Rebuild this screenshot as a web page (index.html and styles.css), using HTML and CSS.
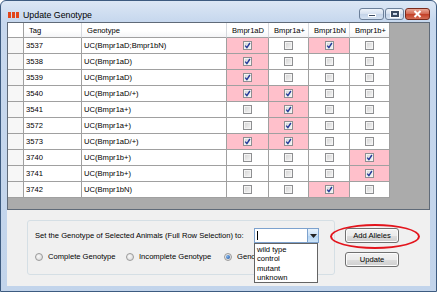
FILE: index.html
```html
<!DOCTYPE html>
<html>
<head>
<meta charset="utf-8">
<link rel="stylesheet" href="styles.css">
</head>
<body>
<div class="window">
  <div class="titlebar">
    <svg class="appicon" width="11" height="6" viewBox="0 0 11 6">
      <rect x="0" y="0" width="3" height="6" fill="#e2461c"/>
      <rect x="4" y="0" width="3" height="6" fill="#e2461c"/>
      <rect x="8" y="0" width="3" height="6" fill="#e2461c"/>
    </svg>
    <span class="title">Update Genotype</span>
    <div class="caption">
      <div class="cbtn min"><span class="minglyph"></span></div>
      <div class="cbtn max"><span class="maxglyph"></span></div>
      <div class="cbtn close">
        <svg width="11" height="8" viewBox="0 0 11 8"><path d="M2.5 1 L8.5 7 M8.5 1 L2.5 7" stroke="#fff" stroke-width="2" fill="none"/></svg>
      </div>
    </div>
  </div>
  <div class="client">
    <div class="grid">
      <div class="hd rh"></div><div class="hd">Tag</div><div class="hd">Genotype</div><div class="hd">Bmpr1aD</div><div class="hd">Bmpr1a+</div><div class="hd">Bmpr1bN</div><div class="hd">Bmpr1b+</div>

      <div class="c rh"></div><div class="c">3537</div><div class="c">UC(Bmpr1aD;Bmpr1bN)</div>
      <div class="c cb pink"><span class="box"><svg viewBox="0 0 9 9"><path d="M2.2 4.6 L3.9 6.6 L6.9 2" class="ck"/></svg></span></div>
      <div class="c cb"><span class="box"></span></div>
      <div class="c cb pink"><span class="box"><svg viewBox="0 0 9 9"><path d="M2.2 4.6 L3.9 6.6 L6.9 2" class="ck"/></svg></span></div>
      <div class="c cb"><span class="box"></span></div>

      <div class="c rh"></div><div class="c">3538</div><div class="c">UC(Bmpr1aD)</div>
      <div class="c cb pink"><span class="box"><svg viewBox="0 0 9 9"><path d="M2.2 4.6 L3.9 6.6 L6.9 2" class="ck"/></svg></span></div>
      <div class="c cb"><span class="box"></span></div>
      <div class="c cb"><span class="box"></span></div>
      <div class="c cb"><span class="box"></span></div>

      <div class="c rh"></div><div class="c">3539</div><div class="c">UC(Bmpr1aD)</div>
      <div class="c cb pink"><span class="box"><svg viewBox="0 0 9 9"><path d="M2.2 4.6 L3.9 6.6 L6.9 2" class="ck"/></svg></span></div>
      <div class="c cb"><span class="box"></span></div>
      <div class="c cb"><span class="box"></span></div>
      <div class="c cb"><span class="box"></span></div>

      <div class="c rh"></div><div class="c">3540</div><div class="c">UC(Bmpr1aD/+)</div>
      <div class="c cb pink"><span class="box"><svg viewBox="0 0 9 9"><path d="M2.2 4.6 L3.9 6.6 L6.9 2" class="ck"/></svg></span></div>
      <div class="c cb pink"><span class="box"><svg viewBox="0 0 9 9"><path d="M2.2 4.6 L3.9 6.6 L6.9 2" class="ck"/></svg></span></div>
      <div class="c cb"><span class="box"></span></div>
      <div class="c cb"><span class="box"></span></div>

      <div class="c rh"></div><div class="c">3541</div><div class="c">UC(Bmpr1a+)</div>
      <div class="c cb"><span class="box"></span></div>
      <div class="c cb pink"><span class="box"><svg viewBox="0 0 9 9"><path d="M2.2 4.6 L3.9 6.6 L6.9 2" class="ck"/></svg></span></div>
      <div class="c cb"><span class="box"></span></div>
      <div class="c cb"><span class="box"></span></div>

      <div class="c rh"></div><div class="c">3572</div><div class="c">UC(Bmpr1a+)</div>
      <div class="c cb"><span class="box"></span></div>
      <div class="c cb pink"><span class="box"><svg viewBox="0 0 9 9"><path d="M2.2 4.6 L3.9 6.6 L6.9 2" class="ck"/></svg></span></div>
      <div class="c cb"><span class="box"></span></div>
      <div class="c cb"><span class="box"></span></div>

      <div class="c rh"></div><div class="c">3573</div><div class="c">UC(Bmpr1aD/+)</div>
      <div class="c cb pink"><span class="box"><svg viewBox="0 0 9 9"><path d="M2.2 4.6 L3.9 6.6 L6.9 2" class="ck"/></svg></span></div>
      <div class="c cb pink"><span class="box"><svg viewBox="0 0 9 9"><path d="M2.2 4.6 L3.9 6.6 L6.9 2" class="ck"/></svg></span></div>
      <div class="c cb"><span class="box"></span></div>
      <div class="c cb"><span class="box"></span></div>

      <div class="c rh"></div><div class="c">3740</div><div class="c">UC(Bmpr1b+)</div>
      <div class="c cb"><span class="box"></span></div>
      <div class="c cb"><span class="box"></span></div>
      <div class="c cb"><span class="box"></span></div>
      <div class="c cb pink"><span class="box"><svg viewBox="0 0 9 9"><path d="M2.2 4.6 L3.9 6.6 L6.9 2" class="ck"/></svg></span></div>

      <div class="c rh"></div><div class="c">3741</div><div class="c">UC(Bmpr1b+)</div>
      <div class="c cb"><span class="box"></span></div>
      <div class="c cb"><span class="box"></span></div>
      <div class="c cb"><span class="box"></span></div>
      <div class="c cb pink"><span class="box"><svg viewBox="0 0 9 9"><path d="M2.2 4.6 L3.9 6.6 L6.9 2" class="ck"/></svg></span></div>

      <div class="c rh"></div><div class="c">3742</div><div class="c">UC(Bmpr1bN)</div>
      <div class="c cb"><span class="box"></span></div>
      <div class="c cb"><span class="box"></span></div>
      <div class="c cb pink"><span class="box"><svg viewBox="0 0 9 9"><path d="M2.2 4.6 L3.9 6.6 L6.9 2" class="ck"/></svg></span></div>
      <div class="c cb"><span class="box"></span></div>
    </div>

    <div class="panel">
      <div class="group">
        <div class="row1">
          <span class="label">Set the Genotype of Selected Animals (Full Row Selection) to:</span>
          <div class="combo"><span class="caret"></span><span class="drop"><svg width="7" height="4" viewBox="0 0 7 4"><path d="M0 0 H7 L3.5 4 Z" fill="#222"/></svg></span></div>
        </div>
        <div class="row2">
          <div class="ritem w1"><span class="radio"></span>Complete Genotype</div>
          <div class="ritem w2"><span class="radio"></span>Incomplete Genotype</div>
          <div class="ritem"><span class="radio on"></span>Genotype Alleles Based</div>
        </div>
      </div>
      <div class="buttons">
        <div class="btn">Add Alleles</div>
        <div class="btn">Update</div>
      </div>
      <div class="list">
        <div class="li">wild type</div>
        <div class="li">control</div>
        <div class="li">mutant</div>
        <div class="li">unknown</div>
      </div>
      <div class="ellipse"></div>
    </div>
  </div>
</div>
</body>
</html>
```

FILE: styles.css
```css
* { box-sizing: border-box; }
html, body { margin: 0; padding: 0; background: #ffffff; }
body {
  font-family: "Liberation Sans", Arial, sans-serif;
  font-size: 7.6px;
  color: #000;
}
.window {
  width: 437px;
  height: 292px;
  border: 1px solid #3d5b80;
  border-radius: 6px 6px 0 0;
  background: linear-gradient(#dce7f5, #c7d8ee 20px, #c2d4eb);
  padding: 0 6px 5px 6px;
  display: flex;
  flex-direction: column;
}
.titlebar {
  height: 21px;
  padding-top: 6px;
  display: flex;
  align-items: center;
  flex: none;
}
.appicon { margin-left: 1px; margin-right: 4px; flex: none; }
.title { font-size: 8.8px; color: #000; }
.caption {
  margin-left: auto;
  display: flex;
  gap: 1px;
  align-self: flex-start;
  margin-top: 1px;
}
.cbtn {
  height: 12px;
  border: 1px solid #6b7f99;
  border-radius: 3px;
  display: flex;
  align-items: center;
  justify-content: center;
  background: linear-gradient(#eef3fa, #d5e0ef 50%, #c4d3e8 51%, #d4e1f1);
}
.min { width: 25px; }
.max { width: 19px; }
.close {
  width: 25px;
  border-color: #7a2a1c;
  background: linear-gradient(#eaa897, #d2654f 50%, #c23d25 51%, #d46d55);
}
.minglyph {
  width: 8px; height: 3px;
  background: #3a4a60;
  border: 1px solid #fff;
  margin-top: 3px;
}
.maxglyph {
  width: 8px; height: 6px;
  border: 2px solid #3a4a60;
  border-top-width: 2px;
  outline: 1px solid #fff;
}
.client {
  flex: 1;
  background: #f0f0f0;
  display: flex;
  flex-direction: column;
}
.grid {
  height: 188px;
  flex: none;
  border: 1px solid #5f6a78;
  background: #ababab;
  display: grid;
  grid-template-columns: 16px 58px 145px 42px 40px 41px 40px;
  grid-template-rows: 15px repeat(10, 16px);
  align-content: start;
  justify-content: start;
}
.hd {
  background: linear-gradient(#ffffff, #ffffff 55%, #f4f5f7);
  border-right: 1px solid #d6d9de;
  border-bottom: 1px solid #a0a0a0;
  padding-left: 5px;
  display: flex;
  align-items: center;
  white-space: nowrap;
}
.hd:nth-child(7) { border-right-color: #a0a0a0; }
.c {
  background: #ffffff;
  border-right: 1px solid #a0a0a0;
  border-bottom: 1px solid #a0a0a0;
  padding-left: 2px;
  display: flex;
  align-items: center;
  white-space: nowrap;
}
.rh { background: #f7f7f7; padding: 0; }
.hd.rh { background: #ffffff; border-right-color: #a0a0a0; }
.cb { justify-content: center; padding: 0; }
.pink { background: #ffc0cb; }
.box {
  width: 9px; height: 9px;
  border: 1px solid #8e8f91;
  background: linear-gradient(135deg, #d2d2d2, #f6f6f6);
  box-shadow: inset 0 0 0 1px #f4f4f4;
  display: block;
  position: relative;
}
.box svg { position: absolute; left: -1px; top: -1px; width: 9px; height: 9px; }
.ck { stroke: #25399a; stroke-width: 1.4; fill: none; }

.panel {
  flex: 1;
  position: relative;
  display: flex;
  align-items: flex-start;
  padding: 10px 0 0 20px;
}
.group {
  width: 308px;
  height: 55px;
  border: 1px solid #d5dfe5;
  border-radius: 3px;
  padding: 7px 0 0 7px;
}
.row1 { display: flex; align-items: center; height: 15px; }
.label { width: 219px; flex: none; white-space: nowrap; }
.combo {
  width: 65px;
  height: 15px;
  border: 1px solid #7da2ce;
  background: #fff;
  display: flex;
  align-items: center;
  justify-content: space-between;
}
.caret { width: 1px; height: 9px; background: #000; margin-left: 2px; }
.drop {
  width: 11px;
  height: 13px;
  border-left: 1px solid #7da2ce;
  background: linear-gradient(#e9f3fc, #c9e0f7 50%, #b2d3f3 51%, #cde4f8);
  display: flex;
  align-items: center;
  justify-content: center;
}
.row2 { display: flex; align-items: center; height: 11px; margin-top: 8px; }
.ritem { display: flex; align-items: center; white-space: nowrap; flex: none; }
.w1 { width: 91px; }
.w2 { width: 98px; }
.radio {
  width: 8px; height: 8px;
  border-radius: 50%;
  border: 1px solid #9a9a9a;
  background: radial-gradient(circle at 40% 40%, #f8f8f8, #d4d4d4);
  margin-right: 5px;
  flex: none;
  position: relative;
}
.radio.on::after {
  content: "";
  position: absolute;
  left: 1px; top: 1px;
  width: 4px; height: 4px;
  border-radius: 50%;
  background: radial-gradient(circle at 35% 35%, #7fb4ec, #1b4f9c);
}
.buttons {
  display: flex;
  flex-direction: column;
  gap: 9px;
  margin-left: 10px;
  margin-top: 8px;
}
.btn {
  width: 54px;
  height: 15px;
  border: 1px solid #707070;
  border-radius: 3px;
  background: linear-gradient(#f2f2f2, #ebebeb 50%, #dddddd 51%, #cfcfcf);
  box-shadow: inset 0 0 0 1px #fcfcfc;
  display: flex;
  align-items: center;
  justify-content: center;
}
.list {
  position: absolute;
  left: 247px;
  top: 33px;
  width: 64px;
  height: 40px;
  border: 1px solid #646464;
  background: #fff;
  padding-top: 1px;
}
.li { height: 9.4px; line-height: 9.4px; padding-left: 2px; }
.ellipse {
  position: absolute;
  left: 323px;
  top: 14px;
  width: 90px;
  height: 25px;
  border: 2.5px solid #e3141c;
  border-radius: 50%;
}
```
